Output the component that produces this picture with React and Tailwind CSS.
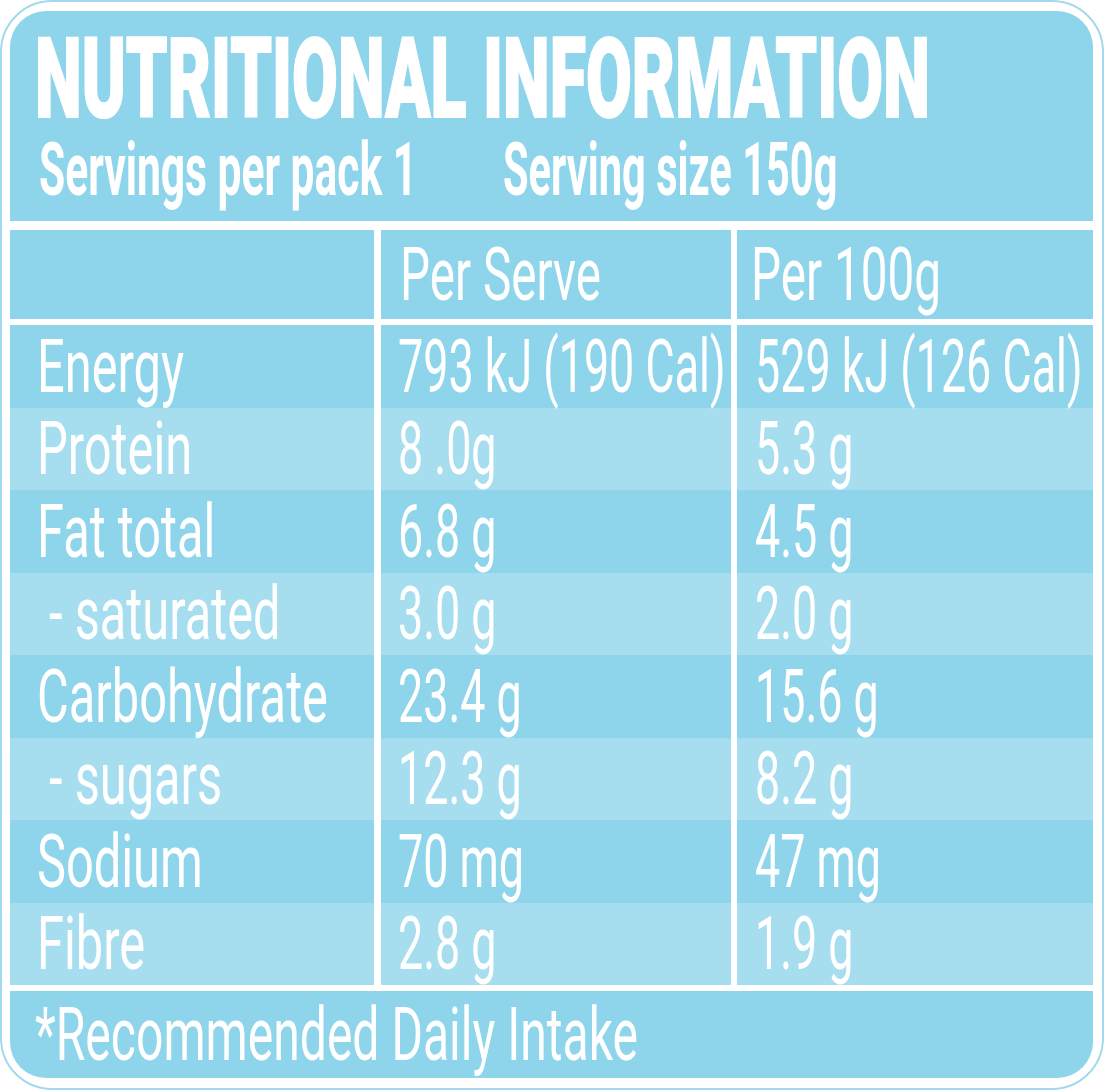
const rows = [
  ["Energy", "793 kJ (190 Cal)", "529 kJ (126 Cal)"],
  ["Protein", "8 .0g", "5.3 g"],
  ["Fat total", "6.8 g", "4.5 g"],
  ["\u00a0- saturated", "3.0 g", "2.0 g"],
  ["Carbohydrate", "23.4 g", "15.6 g"],
  ["\u00a0- sugars", "12.3 g", "8.2 g"],
  ["Sodium", "70 mg", "47 mg"],
  ["Fibre", "2.8 g", "1.9 g"],
];

// squeezes normal Roboto into the narrow look of the label font
const Thin = ({ squeeze = "scale-x-[0.65]", children }) => (
  <span
    className={`inline-block origin-left whitespace-nowrap text-[75px] font-normal leading-none ${squeeze}`}
  >
    {children}
  </span>
);

const Cell = ({ w, pad, bg, squeeze, children }) => (
  <div className={`flex h-full items-center ${w} ${pad} ${bg}`}>
    <Thin squeeze={squeeze}>{children}</Thin>
  </div>
);

const App = () => {
  return (
    <div className="box-border h-[1090px] w-[1104px] rounded-[52px] border-2 border-[#a3d9ec] bg-white pt-[9px] pr-[9px] pb-[10px] pl-[8px] font-['Roboto','Liberation_Sans',sans-serif] text-white">
      <div className="flex h-[1067px] w-[1083px] flex-col overflow-hidden rounded-[36px] bg-white">
        {/* header */}
        <div className="h-[210px] bg-[#8ed5ec] pl-[25px]">
          <div className="mt-[17.5px] h-[101px]">
            <span className="inline-block origin-left scale-x-[0.593] whitespace-nowrap text-[112px] font-black leading-[0.9] [-webkit-text-stroke:2px_white]">
              NUTRITIONAL INFORMATION
            </span>
          </div>
          <div className="mt-[3.5px] flex pl-[4px]">
            <span className="mr-[-276px] inline-block origin-left scale-x-[0.575] whitespace-nowrap text-[74px] font-bold leading-none">
              Servings per pack 1
            </span>
            <span className="ml-[82px] inline-block origin-left scale-x-[0.562] whitespace-nowrap text-[74px] font-bold leading-none">
              Serving size 150g
            </span>
          </div>
        </div>

        {/* column titles */}
        <div className="mt-[9px] flex h-[89px]">
          <div className="h-full w-[364px] bg-[#8ed5ec]" />
          <div className="ml-[7px] h-full">
            <Cell w="w-[350px]" pad="pl-[19px]" bg="bg-[#8ed5ec]" squeeze="scale-x-[0.635]">
              Per Serve
            </Cell>
          </div>
          <div className="ml-[6px] h-full">
            <Cell w="w-[356px]" pad="pl-[14px]" bg="bg-[#8ed5ec]" squeeze="scale-x-[0.635]">
              Per 100g
            </Cell>
          </div>
        </div>

        {/* values */}
        <div className="mt-[6px] flex flex-col">
          {rows.map((r, i) => {
            const bg = i % 2 === 0 ? "bg-[#8ed5ec]" : "bg-[#a6deef]";
            return (
              <div key={r[0]} className="flex h-[82.5px]">
                <Cell w="w-[364px]" pad="pl-[27px]" bg={bg}>{r[0]}</Cell>
                <div className="ml-[7px] h-full">
                  <Cell w="w-[350px]" pad="pl-[17px]" bg={bg} squeeze="scale-x-[0.598]">
                    {r[1]}
                  </Cell>
                </div>
                <div className="ml-[6px] h-full">
                  <Cell w="w-[356px]" pad="pl-[18px]" bg={bg} squeeze="scale-x-[0.598]">
                    {r[2]}
                  </Cell>
                </div>
              </div>
            );
          })}
        </div>

        {/* footer */}
        <div className="mt-[6px] flex h-[87px] items-center bg-[#8ed5ec] pl-[25px]">
          <Thin squeeze="scale-x-[0.641]">*Recommended Daily Intake</Thin>
        </div>
      </div>
    </div>
  );
};

export default App;
